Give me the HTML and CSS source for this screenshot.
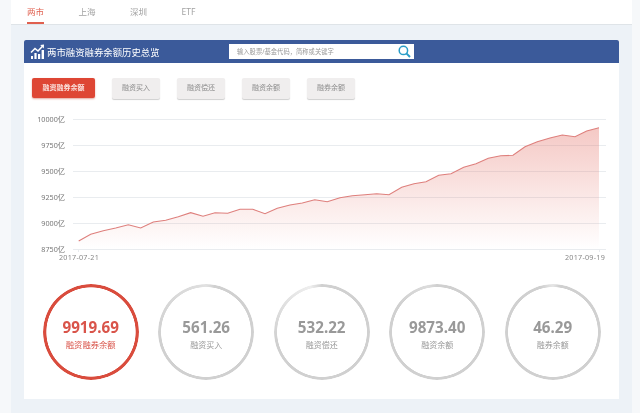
FILE: index.html
```html
<!DOCTYPE html>
<html lang="en">
<head>
  <meta charset="UTF-8" />
  <title>两市融资融券</title>
  <link rel="stylesheet" href="styles.css">
</head>
<body>
  <div class="page">
    <div class="tabs">
      <a class="tab active">两市</a>
      <a class="tab">上海</a>
      <a class="tab">深圳</a>
      <a class="tab">ETF</a>
    </div>

    <div class="card">
      <div class="card-head">
        <svg class="head-icon" width="15" height="15" viewBox="0 0 15 15">
          <path d="M1 8.5 L5 4.5 L8 7 L12.5 2.2" fill="none" stroke="#fff" stroke-width="1.6"/>
          <path d="M10.2 1 L14 0.6 L13.8 4.4 Z" fill="#fff"/>
          <path d="M1 15v-3h2v3zM4.4 15v-6h2.2v6zM8 15v-5h2.2v5zM11.6 15v-9h2.4v9z" fill="#fff"/>
        </svg>
        <h2 class="card-title">两市融资融券余额历史总览</h2>
        <div class="search">
          <span class="search-hint">输入股票/基金代码，简称或关键字</span>
          <svg width="13" height="13" viewBox="0 0 13 13">
            <circle cx="5.4" cy="5.4" r="4.2" fill="none" stroke="#2a9dc8" stroke-width="1.5"/>
            <path d="M8.4 8.4 L12 12" stroke="#2a9dc8" stroke-width="2"/>
          </svg>
        </div>
      </div>

      <div class="btns">
        <a class="btn active">融资融券余额</a>
        <a class="btn">融资买入</a>
        <a class="btn">融资偿还</a>
        <a class="btn">融资余额</a>
        <a class="btn">融券余额</a>
      </div>

      <svg class="chart" width="595" height="155" viewBox="24 110 595 155">
        <defs>
          <linearGradient id="area" gradientUnits="userSpaceOnUse" x1="0" y1="127" x2="0" y2="249">
            <stop offset="0" stop-color="#e2675c" stop-opacity="0.36"/>
            <stop offset="1" stop-color="#e2675c" stop-opacity="0"/>
          </linearGradient>
        </defs>
        <g class="grid">
          <path d="M73 119.5H606M73 145.5H606M73 171.5H606M73 197.5H606M73 223.5H606M73 249.5H606"/>
          <path d="M78.5 249.5V252M599.5 249.5V252"/>
        </g>
        <path fill="url(#area)" d="M78.7 241L90.7 234.3L103.3 230.7L115.7 228L128.3 224.7L140.7 228L153.3 222L165.7 220.3L178.3 216.7L190.7 212.7L203 216.3L215 212.7L227.7 213.3L240 209.3L252.7 209.3L265 213.7L277.3 208.3L290 205L302.3 203L314.7 199.7L327.3 201.7L340 197.7L352.3 195.7L365 194.7L376.7 193.7L389 194.7L401.7 187.3L414 183.7L426 181.7L438.7 175.3L451 173.7L463.7 167.3L476 163.7L488.3 158.3L500.7 155.7L513 155.3L525 146.7L537.3 141.7L550 138L562.3 135L575 136.7L586.7 131L599 127.7V249H78.7Z"/>
        <path class="line" d="M78.7 241L90.7 234.3L103.3 230.7L115.7 228L128.3 224.7L140.7 228L153.3 222L165.7 220.3L178.3 216.7L190.7 212.7L203 216.3L215 212.7L227.7 213.3L240 209.3L252.7 209.3L265 213.7L277.3 208.3L290 205L302.3 203L314.7 199.7L327.3 201.7L340 197.7L352.3 195.7L365 194.7L376.7 193.7L389 194.7L401.7 187.3L414 183.7L426 181.7L438.7 175.3L451 173.7L463.7 167.3L476 163.7L488.3 158.3L500.7 155.7L513 155.3L525 146.7L537.3 141.7L550 138L562.3 135L575 136.7L586.7 131L599 127.7"/>
        <g class="axis-y">
          <text x="65" y="122">10000亿</text>
          <text x="65" y="148">9750亿</text>
          <text x="65" y="174">9500亿</text>
          <text x="65" y="200">9250亿</text>
          <text x="65" y="226">9000亿</text>
          <text x="65" y="252">8750亿</text>
        </g>
        <g class="axis-x">
          <text x="59" y="260">2017-07-21</text>
          <text x="565" y="260">2017-09-19</text>
        </g>
      </svg>

      <div class="rings">
        <div class="ring-wrap active">
          <div class="ring"></div>
          <div class="num">9919.69</div>
          <div class="label">融资融券余额</div>
        </div>
        <div class="ring-wrap">
          <div class="ring p1"></div>
          <div class="num">561.26</div>
          <div class="label">融资买入</div>
        </div>
        <div class="ring-wrap">
          <div class="ring p2"></div>
          <div class="num">532.22</div>
          <div class="label">融资偿还</div>
        </div>
        <div class="ring-wrap">
          <div class="ring p3"></div>
          <div class="num">9873.40</div>
          <div class="label">融资余额</div>
        </div>
        <div class="ring-wrap">
          <div class="ring p4"></div>
          <div class="num">46.29</div>
          <div class="label">融券余额</div>
        </div>
      </div>
    </div>
  </div>
</body>
</html>
```

FILE: styles.css
```css
* {
  box-sizing: border-box;
  margin: 0; padding: 0;
  font-family: 'Noto Sans', 'Noto Sans CJK SC', sans-serif;
}

body {
  background-color: #f6f8fa;
  height: 413px;
  overflow: hidden;
}

.page {
  width: 621px;
  height: 413px;
  margin-left: 11px;
  background-color: #edf2f7;
  filter: blur(0.35px);
}

.tabs {
  display: flex;
  gap: 34.5px;
  height: 25px;
  padding-left: 16px;
  background-color: #fff;
  border-bottom: 1px solid #dfe4e8;
}

.tab {
  font-size: 8.5px;
  line-height: 23px;
  height: 24px;
  color: #a3a3a3;
}

.tab.active {
  color: #e0604f;
  border-bottom: 2px solid #e0604f;
}

.card {
  width: 595px;
  height: 359px;
  margin: 15px 0 0 13px;
  background-color: #fff;
}

.card-head {
  display: flex;
  align-items: center;
  height: 23px;
  padding-left: 6px;
  background-color: #3b5a9a;
  border-radius: 2px 2px 0 0;
}

.head-icon {
  margin-right: 2px;
}

.card-title {
  width: 171px;
  font-size: 9.4px;
  font-weight: normal;
  color: #fff;
}

.search {
  display: flex;
  align-items: center;
  justify-content: space-between;
  width: 185px;
  height: 15px;
  margin-left: 11px;
  padding: 0 3px 0 8px;
  background-color: #fff;
}

.search-hint {
  font-size: 6.3px;
  color: #999;
}

.btns {
  display: flex;
  gap: 17px;
  padding: 15px 0 0 8px;
  height: 47px;
}

.btn {
  width: 48px;
  height: 21px;
  font-size: 7px;
  line-height: 20px;
  text-align: center;
  color: #8d8d8d;
  background-color: #f0eeee;
  border-radius: 2px;
  box-shadow: 0 1px 1px #cfcfcf;
}

.btn.active {
  width: 63px;
  height: 20px;
  color: #fbe3df;
  font-weight: bold;
  background-color: #de4634;
  box-shadow: 0 1px 2px #e3a79f;
}

.chart {
  display: block;
}

.grid path {
  fill: none;
  stroke: #e9ecef;
  stroke-width: 1;
}

.line {
  fill: none;
  stroke: #de7f7c;
  stroke-width: 1.1;
}

.axis-y text {
  font-size: 7.2px;
  fill: #777;
  text-anchor: end;
}

.axis-x text {
  font-size: 7.2px;
  fill: #888;
  letter-spacing: 0.25px;
}

.rings {
  display: flex;
  gap: 19.5px;
  padding: 18.5px 0 0 18.7px;
}

.ring-wrap {
  position: relative;
  display: flex;
  flex-direction: column;
  align-items: center;
  justify-content: center;
  width: 96px;
  height: 96px;
  padding-top: 5px;
  color: #999;
}

.ring {
  position: absolute;
  inset: 0;
  border-radius: 50%;
  background: #d0d0d0;
  -webkit-mask: radial-gradient(closest-side, transparent 44.6px, #000 45.2px);
  mask: radial-gradient(closest-side, transparent 44.6px, #000 45.2px);
}

.ring.p1 {
  background: conic-gradient(#e2e2e2 0, #d0d0d0 3%, #d0d0d0 72%, #dedede 98%, #e2e2e2 100%);
}

.ring.p2 {
  background: conic-gradient(#d0d0d0 0, #d0d0d0 72%, #eeeeee 96%, #d0d0d0 100%);
}

.ring.p3 {
  background: conic-gradient(#d0d0d0 0, #d0d0d0 85%, #dcdcdc 97%, #d0d0d0 100%);
}

.ring.p4 {
  background: conic-gradient(#e6e6e6 0, #d0d0d0 2%, #d0d0d0 96%, #e6e6e6 100%);
}

.active .ring {
  background: #d94c3d;
  -webkit-mask: radial-gradient(closest-side, transparent 44.3px, #000 45px);
  mask: radial-gradient(closest-side, transparent 44.3px, #000 45px);
}

.num {
  font-size: 15.2px;
  font-weight: bold;
  line-height: 19px;
}

.label {
  font-size: 8px;
  line-height: 13px;
  margin-top: 1px;
}

.ring-wrap.active {
  color: #d9544a;
}

.ring-wrap.active .label {
  font-size: 8.3px;
}
```
